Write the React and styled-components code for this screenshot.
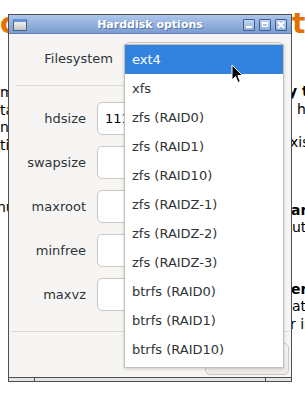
import React from 'react';
import styled, { createGlobalStyle } from 'styled-components';

const GlobalStyle = createGlobalStyle`
   html, body {
      margin: 0;
      padding: 0;
      background: #ffffff;
   }
   body {
      font-family: "DejaVu Sans", "Noto Sans", sans-serif;
      overflow: hidden;
   }
`;

const filesystems = [
   'ext4',
   'xfs',
   'zfs (RAID0)',
   'zfs (RAID1)',
   'zfs (RAID10)',
   'zfs (RAIDZ-1)',
   'zfs (RAIDZ-2)',
   'zfs (RAIDZ-3)',
   'btrfs (RAID0)',
   'btrfs (RAID1)',
   'btrfs (RAID10)',
];

const fields = [
   { label: 'hdsize', value: '111.79' },
   { label: 'swapsize', value: '' },
   { label: 'maxroot', value: '' },
   { label: 'minfree', value: '' },
   { label: 'maxvz', value: '' },
];

const App = () => (
   <>
      <GlobalStyle />
      <Desktop>
         <Page>
            <Column>
               <Heading>oxmox</Heading>
               <BgLine $gap={43}>makes the system bootable</BgLine>
               <BgLine>tall packages</BgLine>
               <BgLine>nodes</BgLine>
               <BgLine>tion</BgLine>
               <BgLine $gap={45} $indent={-3}>nu</BgLine>
            </Column>
            <Column>
               <Heading>t</Heading>
               <BgLine $gap={42} $bold $indent={-4}>y the installation target</BgLine>
               <BgLine $indent={5}>hard disk will be used</BgLine>
               <BgLine $gap={16} $indent={-2}>xisting partitions will be lost</BgLine>
               <BgLine $gap={50} $bold $indent={-1}>are detection</BgLine>
               <BgLine>utomatically configures</BgLine>
               <BgLine $gap={44} $bold $indent={-1}>er interface</BgLine>
               <BgLine>ation is done via</BgLine>
               <BgLine $indent={-2}>r interface in a browser</BgLine>
            </Column>
         </Page>

         <Window>
            <TitleBar>
               <AppIcon />
               <Title>Harddisk options</Title>
               <TitleButtons>
                  <WinButton>
                     <MinGlyph />
                  </WinButton>
                  <WinButton>
                     <MaxGlyph />
                  </WinButton>
                  <WinButton>
                     <svg width="8" height="8" viewBox="0 0 8 8">
                        <path d="M1 1 L7 7 M7 1 L1 7" stroke="#ffffff" strokeWidth="2" />
                     </svg>
                  </WinButton>
               </TitleButtons>
            </TitleBar>

            <Content>
               <FsRow>
                  <Label>Filesystem</Label>
                  <Combo>
                     ext4
                     <Popup>
                        {filesystems.map((fs, i) => (
                           <Item key={fs} $selected={i === 0}>{fs}</Item>
                        ))}
                     </Popup>
                  </Combo>
               </FsRow>

               <Separator $inset={7} $gap={10} />

               <FieldGrid>
                  {fields.map(f => (
                     <React.Fragment key={f.label}>
                        <Label>{f.label}</Label>
                        <Input defaultValue={f.value} />
                     </React.Fragment>
                  ))}
               </FieldGrid>

               <Separator $inset={2} $gap={20} />

               <ButtonRow>
                  <Button>OK</Button>
               </ButtonRow>
            </Content>

            <HandleStrip>
               <Handle />
               <HandleMiddle />
               <Handle />
            </HandleStrip>
         </Window>

         <Cursor width="13" height="20" viewBox="0 0 13 20">
            <path
               d="M1 1 L1 16 L4.5 12.5 L7 18.5 L9.3 17.5 L6.8 11.6 L11.5 11.6 Z"
               fill="#000000"
               stroke="#ffffff"
               strokeWidth="1"
               strokeLinejoin="round"
            />
         </Cursor>
      </Desktop>
   </>
);

export default App;

const Desktop = styled.div`
   position: relative;
   width: 305px;
   height: 394px;
   overflow: hidden;
   background: #ffffff;
`;

const Page = styled.div`
   display: grid;
   grid-template-columns: 292px 1fr;
   white-space: nowrap;
   font-family: "DejaVu Sans", sans-serif;
   font-size: 14px;
   line-height: 17.5px;
   color: #000000;
`;

const Column = styled.div`
   min-width: 0;
`;

const Heading = styled.div`
   margin-top: 7px;
   font-size: 28px;
   line-height: 34px;
   font-weight: bold;
   color: #e57000;
`;

const BgLine = styled.div`
   margin-top: ${props => props.$gap || 0}px;
   margin-left: ${props => props.$indent || 0}px;
   font-weight: ${props => props.$bold ? 'bold' : 'normal'};
`;

const Window = styled.div`
   position: absolute;
   left: 8px;
   top: 14px;
   width: 284px;
   height: 368px;
   box-sizing: border-box;
   border: 1px solid #4f4f4f;
   background: #f6f5f4;
   display: flex;
   flex-direction: column;
`;

const TitleBar = styled.div`
   height: 19px;
   box-sizing: border-box;
   display: grid;
   grid-template-columns: 1fr auto 1fr;
   align-items: center;
   padding: 0 4px;
   background: linear-gradient(#adc6ea, #7b9dd0);
   border-bottom: 1px solid #5f7fb2;
`;

const AppIcon = styled.span`
   width: 14px;
   height: 12px;
   box-sizing: border-box;
   border: 1px solid #4a5f80;
   border-top: 3px solid #6a92d2;
   background: linear-gradient(#f2f2f2, #c2c2c2);
   margin-top: 1px;
`;

const Title = styled.span`
   font-family: "DejaVu Sans", sans-serif;
   font-size: 11px;
   font-weight: bold;
   color: #ffffff;
   text-shadow: 1px 1px 0 rgba(45, 70, 115, 0.55);
   white-space: nowrap;
`;

const TitleButtons = styled.div`
   display: flex;
   justify-content: flex-end;
   gap: 4px;
   margin-top: 1px;
`;

const WinButton = styled.span`
   width: 12px;
   height: 12px;
   box-sizing: border-box;
   border: 1px solid #3f5e92;
   border-radius: 1px;
   background: linear-gradient(#c3d6f0, #90aedb);
   display: flex;
   align-items: center;
   justify-content: center;
`;

const MinGlyph = styled.span`
   width: 6px;
   height: 2px;
   background: #ffffff;
   margin-top: 5px;
`;

const MaxGlyph = styled.span`
   width: 6px;
   height: 5px;
   box-sizing: border-box;
   border: 1px solid #ffffff;
   border-top-width: 2px;
`;

const Content = styled.div`
   height: 343px;
   box-sizing: border-box;
   padding-top: 8px;
   display: flex;
   flex-direction: column;
`;

const FsRow = styled.div`
   display: grid;
   grid-template-columns: 104px 160px;
   column-gap: 11px;
   align-items: center;
`;

const Label = styled.div`
   text-align: right;
   font-size: 13px;
   color: #2e3436;
   white-space: nowrap;
`;

const Combo = styled.div`
   position: relative;
   height: 33px;
   box-sizing: border-box;
   border: 1px solid #cdc7c2;
   border-radius: 5px;
   background: linear-gradient(#f6f5f4, #edebe9);
   padding-left: 7px;
   line-height: 31px;
   font-size: 13px;
   color: #2e3436;
`;

const Popup = styled.div`
   position: absolute;
   top: 1px;
   left: -1px;
   width: 160px;
   box-sizing: border-box;
   background: #ffffff;
   border: 1px solid #c4beb8;
   padding-bottom: 3px;
   box-shadow: 0 1px 3px rgba(0, 0, 0, 0.18);
   z-index: 2;
`;

const Item = styled.div`
   height: 29px;
   line-height: 29px;
   padding-left: 7px;
   font-size: 13px;
   white-space: nowrap;
   color: ${props => props.$selected ? '#ffffff' : '#2e3436'};
   background: ${props => props.$selected ? '#3282e0' : 'transparent'};
`;

const Separator = styled.div`
   height: 1px;
   flex: none;
   margin: ${props => props.$gap}px ${props => props.$inset}px 0;
   background: #dcd8d4;
`;

const FieldGrid = styled.div`
   margin-top: 16px;
   display: grid;
   grid-template-columns: 77px 187px;
   grid-auto-rows: 33px;
   column-gap: 11px;
   row-gap: 11px;
   align-items: center;
`;

const Input = styled.input`
   width: 100%;
   height: 33px;
   box-sizing: border-box;
   border: 1px solid #cdc7c2;
   border-radius: 5px;
   background: #ffffff;
   padding: 0 7px;
   font-family: "DejaVu Sans", sans-serif;
   font-size: 13px;
   color: #000000;
   outline: none;
`;

const ButtonRow = styled.div`
   margin-top: 11px;
   display: flex;
   justify-content: flex-end;
   padding-right: 2px;
`;

const Button = styled.button`
   width: 84px;
   height: 32px;
   box-sizing: border-box;
   border: 1px solid #cdc7c2;
   border-radius: 5px;
   background: linear-gradient(#f6f5f4, #edebe9);
   font-family: "DejaVu Sans", sans-serif;
   font-size: 13px;
   color: #2e3436;
`;

const HandleStrip = styled.div`
   flex: 1;
   display: flex;
   border-top: 1px solid #4f4f4f;
   background: #e4e4e4;
`;

const Handle = styled.div`
   width: 25px;
   &:first-child { border-right: 1px solid #4f4f4f; }
   &:last-child { border-left: 1px solid #4f4f4f; }
`;

const HandleMiddle = styled.div`
   flex: 1;
`;

const Cursor = styled.svg`
   position: absolute;
   left: 231px;
   top: 64px;
   z-index: 5;
`;
